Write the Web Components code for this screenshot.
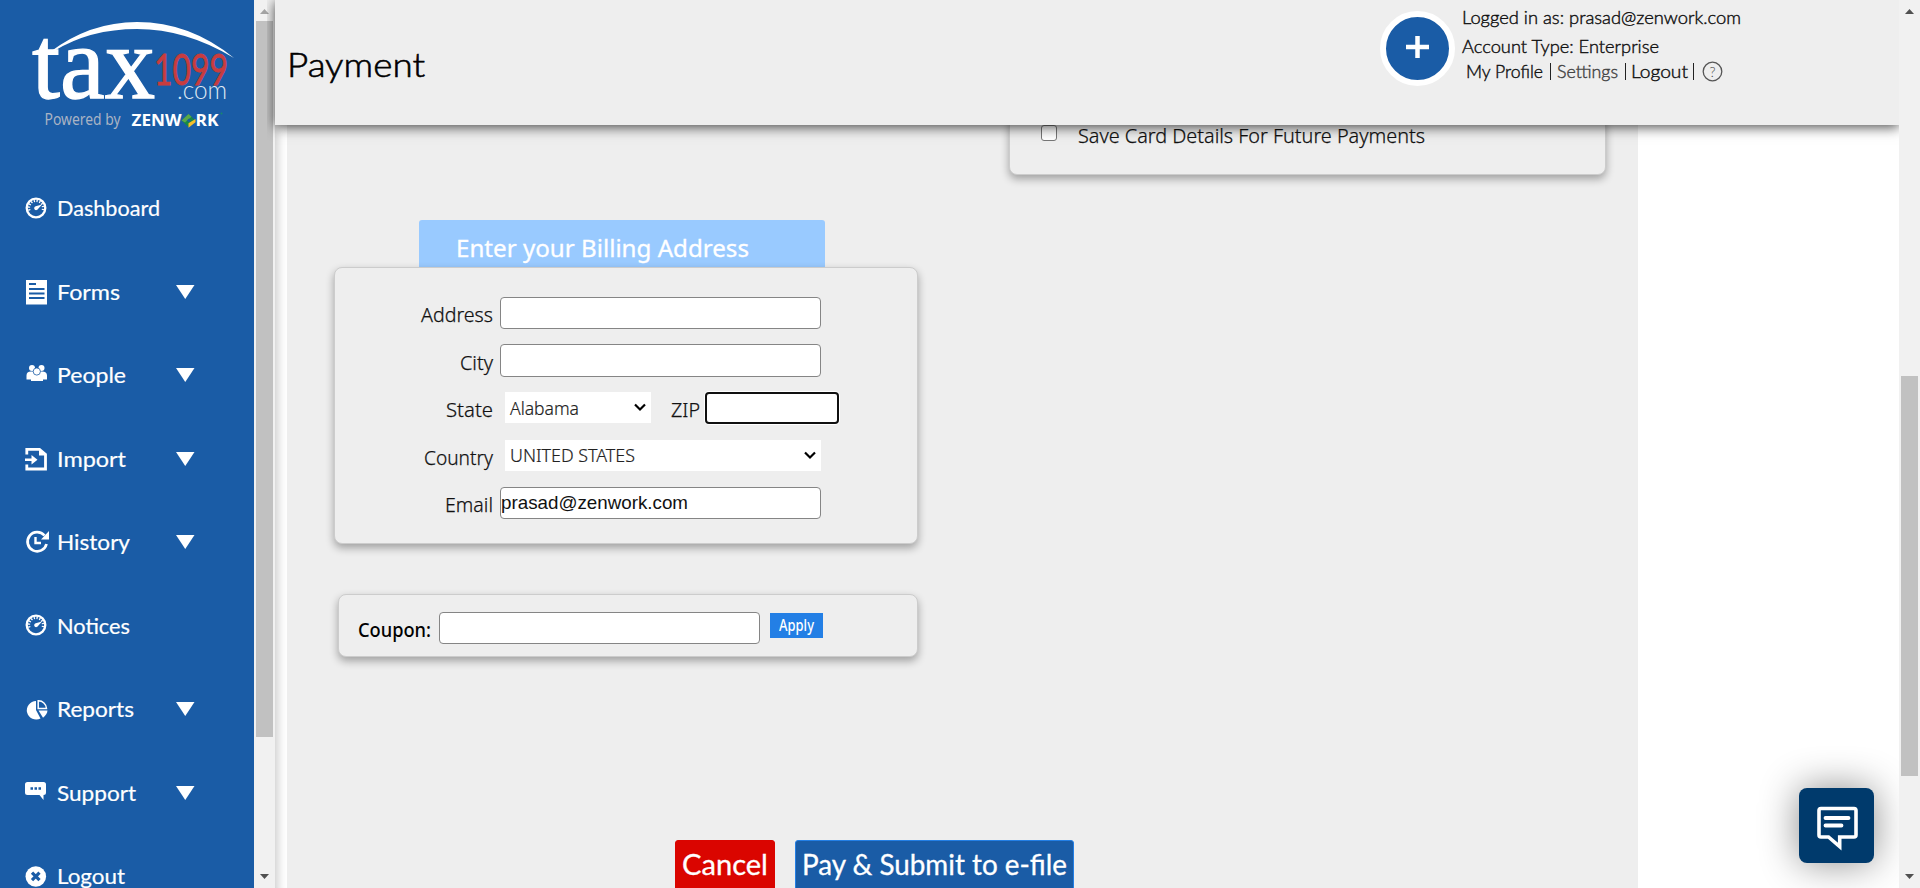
<!DOCTYPE html>
<html lang="en">
<head>
<meta charset="utf-8">
<title>Payment</title>
<style>
html,body{margin:0;height:100%;overflow:hidden;background:#fff;font-family:"Noto Sans",sans-serif;color:#111}
</style>
</head>
<body>
<payment-app></payment-app>
<script>
class BaseEl extends HTMLElement{
  connectedCallback(){
    if(!this.shadowRoot){this.attachShadow({mode:'open'}).innerHTML=this.view();}
    this.ready();
  }
  attr(n,d){return this.getAttribute(n)||d||'';}
  ready(){}
}

/* A single line of text, condensed or widened to the width given in "w". */
class FitText extends BaseEl{
  view(){return `<style>
    :host{display:block;flex:none;white-space:nowrap;width:${this.attr('w')}px}
    span{display:inline-block;transform-origin:0 50%}
    </style><span><slot></slot></span>`;}
  ready(){
    const s=this.shadowRoot.querySelector('span');
    const n=s.offsetWidth;
    if(n) s.style.transform='scaleX('+(parseFloat(this.attr('w'))/s.getBoundingClientRect().width)+')';
  }
}

class ScrollTrack extends BaseEl{
  view(){return `<style>
    :host{display:flex;flex-direction:column;flex:none;width:21px;height:888px;background:#f1f1f1;box-sizing:border-box;align-items:center}
    svg{display:block;flex:none}
    .thumb{width:17px;height:${this.attr('size')}px;margin-top:${this.attr('start')}px;background:#c1c1c1}
    .down{margin-top:auto}
    </style>
    <svg width="21" height="21"><path d="M6 14h9l-4.500-5z" fill="${this.attr('up','#505050')}"/></svg>
    <div class="thumb"></div>
    <svg class="down" width="21" height="21"><path d="M6 7h9l-4.500 5z" fill="#505050"/></svg>`;}
}

class BrandLogo extends BaseEl{
  view(){return `<style>:host{display:block;height:165.750px}svg{display:block}</style>
  <svg width="254" height="150">
    <path d="M50 52Q90 22 137 22Q190 22 234 58Q186 29 137 29Q90 29 54 51Z" fill="#fff"/>
    <text x="32" y="98" font-family="Liberation Serif,serif" font-size="103" textLength="123" lengthAdjust="spacingAndGlyphs" fill="#fff" stroke="#fff" stroke-width="1.300">tax</text>
    <text x="154" y="84.500" font-family="Lato,sans-serif" font-size="42" textLength="74" lengthAdjust="spacingAndGlyphs" fill="#c83c3e" stroke="#c83c3e" stroke-width=".8">1099</text>
    <text x="177" y="99" font-family="Lato,sans-serif" font-weight="300" font-size="25" textLength="50" lengthAdjust="spacingAndGlyphs" fill="#dfe8f3">.com</text>
    <text x="44.500" y="125" font-family="Noto Sans,sans-serif" font-size="15.500" textLength="76" lengthAdjust="spacingAndGlyphs" fill="#a9b3c4">Powered by</text>
    <text x="131.500" y="126" font-family="Noto Sans,sans-serif" font-weight="700" font-size="16.500" textLength="50" lengthAdjust="spacingAndGlyphs" fill="#fff">ZENW</text>
    <text x="195.500" y="126" font-family="Noto Sans,sans-serif" font-weight="700" font-size="16.500" textLength="23" lengthAdjust="spacingAndGlyphs" fill="#fff">RK</text>
    <path d="M181.500 120.500l7-6.500 7 6.500-7 6.500z" fill="#178a43"/>
    <path d="M181.500 120.500l7-6.500 3 2.800-6.500 5.700z" fill="#5aa84a"/>
    <path d="M186.800 120.500l2.200-2 2 2-2 1.800z" fill="#1a5ca6"/>
    <path d="M188.500 123.300l7-4.300v3.300l-7 5.500z" fill="#f3bf2c"/>
    <circle cx="221.500" cy="113.500" r="1" fill="#178a6a"/>
  </svg>`;}
}

const ICONS={
  gauge:'<circle cx="11" cy="11" r="9.300" fill="none" stroke="#fff" stroke-width="2.300"/><path d="M4.500 13.500a7 7 0 1 1 13 0" fill="none" stroke="#fff" stroke-width="2.200" stroke-dasharray="1.300 1.500"/><path d="M17 7.500l-4 4.500a2 2 0 1 1-2.300-2.800z" fill="#fff"/>',
  forms:'<path d="M1 0h21v24.500H1z" fill="#fff"/><path d="M4 4h7M4 9h15.500M4 13.500h15.500M4 18h15.500" stroke="#1a5ca6" stroke-width="2"/>',
  people:'<g fill="#fff"><circle cx="7" cy="4" r="3"/><circle cx="16.500" cy="4" r="3"/><path d="M1.500 15.500V11.500q0-4 4.500-4h11q5 0 5 4v4h-4v1.500h-12V15.500z"/><circle cx="11.800" cy="7.500" r="3.600" stroke="#1a5ca6" stroke-width=".8"/></g>',
  import:'<path d="M1.800 7.500V2.300h12.700L20.500 7.500v14.500H1.800V17.500" fill="none" stroke="#fff" stroke-width="2.800"/><path d="M14 1.500l7.500 7H14z" fill="#fff"/><path d="M0 11.500h6.500V8L12.500 12.800l-6 4.700V14H0z" fill="#fff"/>',
  history:'<path d="M19.500 4.500A9.600 9.600 0 1 0 21.500 13" fill="none" stroke="#fff" stroke-width="2.700"/><path d="M24 0v8.500h-8z" fill="#fff"/><path d="M10.500 6v6h5.500" fill="none" stroke="#fff" stroke-width="2.400"/>',
  reports:'<path d="M11 3A9.300 9.300 0 1 0 15.500 20.500L11 12z" fill="#fff"/><path d="M13.200 2.800V10.500h8.300a8 8 0 0 0-8.300-7.700z" fill="none" stroke="#fff" stroke-width="1.500"/><path d="M13.500 12.500h9q-.3 4-4.500 7.300z" fill="#fff"/>',
  support:'<path d="M2.500 1h16q2.500 0 2.500 2.500v8q0 2.500-2.500 2.500v5l-4-5h-12Q0 14 0 11.500v-8Q0 1 2.500 1z" fill="#fff"/><path d="M5.500 7.500h2.500M9.500 7.500H12M13.500 7.500H16" stroke="#1a5ca6" stroke-width="2.500"/>',
  close:'<circle cx="10.800" cy="11.500" r="10.300" fill="#fff"/><path d="M7 7.700l7.500 7.500M14.500 7.700L7 15.200" stroke="#1a5ca6" stroke-width="3.200"/>'
};

class NavItem extends BaseEl{
  view(){return `<style>
    :host{display:flex;align-items:center;height:83.500px;padding-left:25px;color:#fff;font:22px/30px Lato,sans-serif;box-sizing:border-box;-webkit-text-stroke:.2px #fff}
    .ic{width:32px;height:24px;flex:none;overflow:visible}
    .arrow{margin-left:${176-57-parseFloat(this.attr('w'))}px;flex:none}
    fit-text{padding-top:1px}
    </style>
    <svg class="ic" viewBox="0 -1 32 24">${ICONS[this.attr('icon')]}</svg>
    <fit-text w="${this.attr('w')}">${this.attr('label')}</fit-text>
    ${this.hasAttribute('menu')?'<svg class="arrow" width="20" height="15"><path d="M0 1h18.500L9.250 15z" fill="#fff"/></svg>':''}`;}
}

class SideBar extends BaseEl{
  view(){
    const items=[['Dashboard','gauge',103,0],['Forms','forms',63,1],['People','people',69,1],['Import','import',69,1],['History','history',73,1],['Notices','gauge',73,0],['Reports','reports',77,1],['Support','support',79,1],['Logout','close',68,0]];
    return `<style>:host{display:block;flex:none;width:254px;height:888px;overflow:hidden;background:#1a5ca6}</style>
    <brand-logo></brand-logo>
    ${items.map(i=>`<nav-item label="${i[0]}" icon="${i[1]}" w="${i[2]}" ${i[3]?'menu':''}></nav-item>`).join('')}`;}
}

class PageHeader extends BaseEl{
  view(){return `<style>
    :host{display:flex;height:125px;background:#eee;box-shadow:0 2px 12px rgba(0,0,0,.72);position:relative;z-index:2;font-family:Lato,sans-serif;color:#111;box-sizing:border-box;clip-path:inset(0 0 -30px -8px)}
    .title{font-size:34px;line-height:50px;padding:39px 0 0 12px;width:1093px;box-sizing:content-box;font-weight:300;color:#000;-webkit-text-stroke:.6px #000}
    .add{width:75px;height:75px;box-sizing:border-box;border:6px solid #fff;border-radius:50%;background:#1a5ca6;margin-top:11px;flex:none}
    .who{padding-left:7px;font-size:17px;line-height:20px;padding-top:8px;font-weight:300;-webkit-text-stroke:.4px currentColor}
    .who>*{margin-bottom:8.500px}
    .links{display:flex;align-items:center;padding-left:4px;margin-top:-4px}
    .bar{width:1px;height:17px;background:#222;flex:none}
    </style>
    <div class="title"><fit-text w="138">Payment</fit-text></div>
    <div class="add"><svg width="63" height="63"><path d="M20 30h23M31.500 19v22" stroke="#fff" stroke-width="4.500"/></svg></div>
    <div class="who">
      <fit-text w="279">Logged in as: prasad@zenwork.com</fit-text>
      <fit-text w="197">Account Type: Enterprise</fit-text>
      <div class="links">
        <fit-text w="77">My Profile</fit-text><div class="bar" style="margin:0 6px 0 7px"></div>
        <fit-text w="61" style="color:#444">Settings</fit-text><div class="bar" style="margin:0 5px 0 7px"></div>
        <fit-text w="57">Logout</fit-text><div class="bar" style="margin:0 8px 0 5px"></div>
        <svg width="21" height="21"><circle cx="10.500" cy="10.500" r="9.300" fill="none" stroke="#555" stroke-width="1.300"/><text x="10.500" y="15.500" text-anchor="middle" font-family="Lato,sans-serif" font-size="14" fill="#444">?</text></svg>
      </div>
    </div>`;}
}

class CardPanel extends BaseEl{
  view(){return `<style>
    :host{display:block;box-sizing:border-box;background:#eee;border:1px solid #ccc;border-radius:8px;box-shadow:0 4px 8px rgba(0,0,0,.33)}
    </style><slot></slot>`;}
}

class InputBox extends BaseEl{
  view(){return `<style>
    :host{display:flex;flex:none;box-sizing:border-box;width:${this.attr('w','321')}px;height:${this.attr('h','32')}px;background:#fff;border:1px solid #858585;border-radius:4px;font:18.500px/30px "Liberation Sans",sans-serif}
    :host([focused]){border:2px solid #101010;box-shadow:0 0 0 1px #fff}
    </style><slot></slot>`;}
}

class SelectBox extends BaseEl{
  view(){return `<style>
    :host{display:flex;align-items:center;flex:none;box-sizing:border-box;width:${this.attr('w')}px;height:31px;background:#fff;padding:0 5px 0 5px;font-size:18.500px;line-height:30px;color:#222;font-weight:300;-webkit-text-stroke:.2px #222}
    svg{margin-left:auto}
    </style><slot></slot><svg width="12" height="9"><path d="M1 1.500l5 5 5-5" fill="none" stroke="#000" stroke-width="2.200"/></svg>`;}
}

class FormRow extends BaseEl{
  view(){return `<style>
    :host{display:flex;align-items:flex-start;height:47.500px}
    .label{width:158px;display:flex;justify-content:flex-end;font-size:20px;line-height:36px;flex:none;margin-right:7px;font-weight:300;-webkit-text-stroke:.25px #111}
    ::slotted(select-box){margin-left:5px}
    </style><div class="label"><fit-text w="${this.attr('lw')}">${this.attr('label')}</fit-text></div><slot></slot>`;}
}

class PayButton extends BaseEl{
  view(){return `<style>
    :host{display:block;box-sizing:border-box;height:49px;border:1px solid;border-radius:3px 3px 0 0;color:#fff;font:400 28px/47px Lato,sans-serif;padding-left:6px;-webkit-text-stroke:.3px #fff}
    :host([kind=cancel]){width:100px;background:#da0500;border-color:#da0500;padding-left:6px}
    :host([kind=pay]){width:279px;background:#1a5ca6;border-color:#237fe5}
    </style><slot></slot>`;}
}

class ChatButton extends BaseEl{
  view(){return `<style>
    :host{display:block;position:fixed;right:46px;bottom:25px;width:75px;height:75px;border-radius:8px;background:#003a6c;box-shadow:0 0 38px rgba(0,0,0,.45);z-index:3;clip-path:inset(-60px -25px -60px -60px)}
    </style><svg width="75" height="75" fill="none" stroke="#fff"><path d="M22 20.500h33q2 0 2 2v24.500q0 2-2 2H40.700v9.500L29.500 49H22q-2 0-2-2V22.500q0-2 2-2z" stroke-width="3.600"/><path d="M26.500 30h23M26.500 37.500h16" stroke-width="3.800" stroke-linecap="round"/></svg>`;}
}

class PaymentForm extends BaseEl{
  view(){return `<style>
    :host{display:grid;grid-template-columns:722px 597px;height:763px;width:1351px;box-sizing:border-box;background:#eee;overflow:hidden}
    .left{padding-top:95px}
    .tab{width:406px;height:47px;box-sizing:border-box;margin-left:132px;padding:9px 0 0 37px;background:#99caff;border-radius:3px 3px 0 0;color:#fff;font-size:23px;line-height:38px;-webkit-text-stroke:.3px #fff}
    .billing{margin-left:47px;width:584px;height:277px;padding-top:29px}
    .zip{font-size:20px;line-height:36px;margin:0 5px 0 20px;font-weight:300;-webkit-text-stroke:.25px #111}
    .coupon{display:flex;margin:50px 0 0 51px;width:580px;height:63px;padding:17px 0 0 19px}
    .coupon .name{font-size:20px;line-height:36px;font-weight:500;color:#000;margin-right:8px}
    .apply{width:53px;height:25px;background:#237fe5;color:#fff;font-size:15.500px;line-height:25px;font-weight:500;margin:1px 0 0 10px;padding-left:9px;box-sizing:border-box}
    .actions{display:flex;gap:20px;margin:183px 0 0 388px;width:500px}
    .save{display:flex;height:60px;margin-top:-10px;padding:9px 0 0 31px}
    .box{width:16px;height:16px;box-sizing:border-box;border:1px solid #767676;border-radius:3px;background:#fff;margin-right:20.500px;flex:none}
    .save fit-text{font-size:20px;line-height:20px;margin-top:1px;font-weight:300;-webkit-text-stroke:.25px #111}
    </style>
    <div class="left">
      <div class="tab"><fit-text w="293">Enter your Billing Address</fit-text></div>
      <card-panel class="billing">
        <form-row label="Address" lw="72"><input-box></input-box></form-row>
        <form-row label="City" lw="33"><input-box h="33" style="margin-top:-.6px"></input-box></form-row>
        <form-row label="State" lw="47"><select-box w="146"><fit-text w="69">Alabama</fit-text></select-box><div class="zip"><fit-text w="29">ZIP</fit-text></div><input-box w="134" focused></input-box></form-row>
        <form-row label="Country" lw="69"><select-box w="316"><fit-text w="125">UNITED STATES</fit-text></select-box></form-row>
        <form-row label="Email" lw="48"><input-box><fit-text w="187">prasad@zenwork.com</fit-text></input-box></form-row>
      </card-panel>
      <card-panel class="coupon">
        <fit-text class="name" w="73">Coupon:</fit-text><input-box></input-box>
        <div class="apply"><fit-text w="35">Apply</fit-text></div>
      </card-panel>
      <div class="actions">
        <pay-button kind="cancel"><fit-text w="86">Cancel</fit-text></pay-button>
        <pay-button kind="pay"><fit-text w="265">Pay &amp; Submit to e-file</fit-text></pay-button>
      </div>
    </div>
    <card-panel class="save"><div class="box"></div><fit-text w="347">Save Card Details For Future Payments</fit-text></card-panel>`;}
}

class PaymentApp extends BaseEl{
  view(){return `<style>
    :host{display:flex;width:1920px;height:888px;overflow:hidden}
    main{width:1624px;height:888px;background:#fff;position:relative}
    .body{padding-left:12px;box-shadow:inset 12px 0 10px -9px rgba(0,0,0,.2)}
    </style>
    <side-bar></side-bar>
    <scroll-track start="0" size="716" up="#a3a3a3"></scroll-track>
    <main><page-header></page-header><div class="body"><payment-form></payment-form></div></main>
    <scroll-track start="355" size="400"></scroll-track>
    <chat-button></chat-button>`;}
}

const defs={'fit-text':FitText,'scroll-track':ScrollTrack,'brand-logo':BrandLogo,'nav-item':NavItem,'side-bar':SideBar,'page-header':PageHeader,'card-panel':CardPanel,'input-box':InputBox,'select-box':SelectBox,'form-row':FormRow,'pay-button':PayButton,'chat-button':ChatButton,'payment-form':PaymentForm,'payment-app':PaymentApp};
for(const n in defs) customElements.define(n,defs[n]);
</script>
</body>
</html>
